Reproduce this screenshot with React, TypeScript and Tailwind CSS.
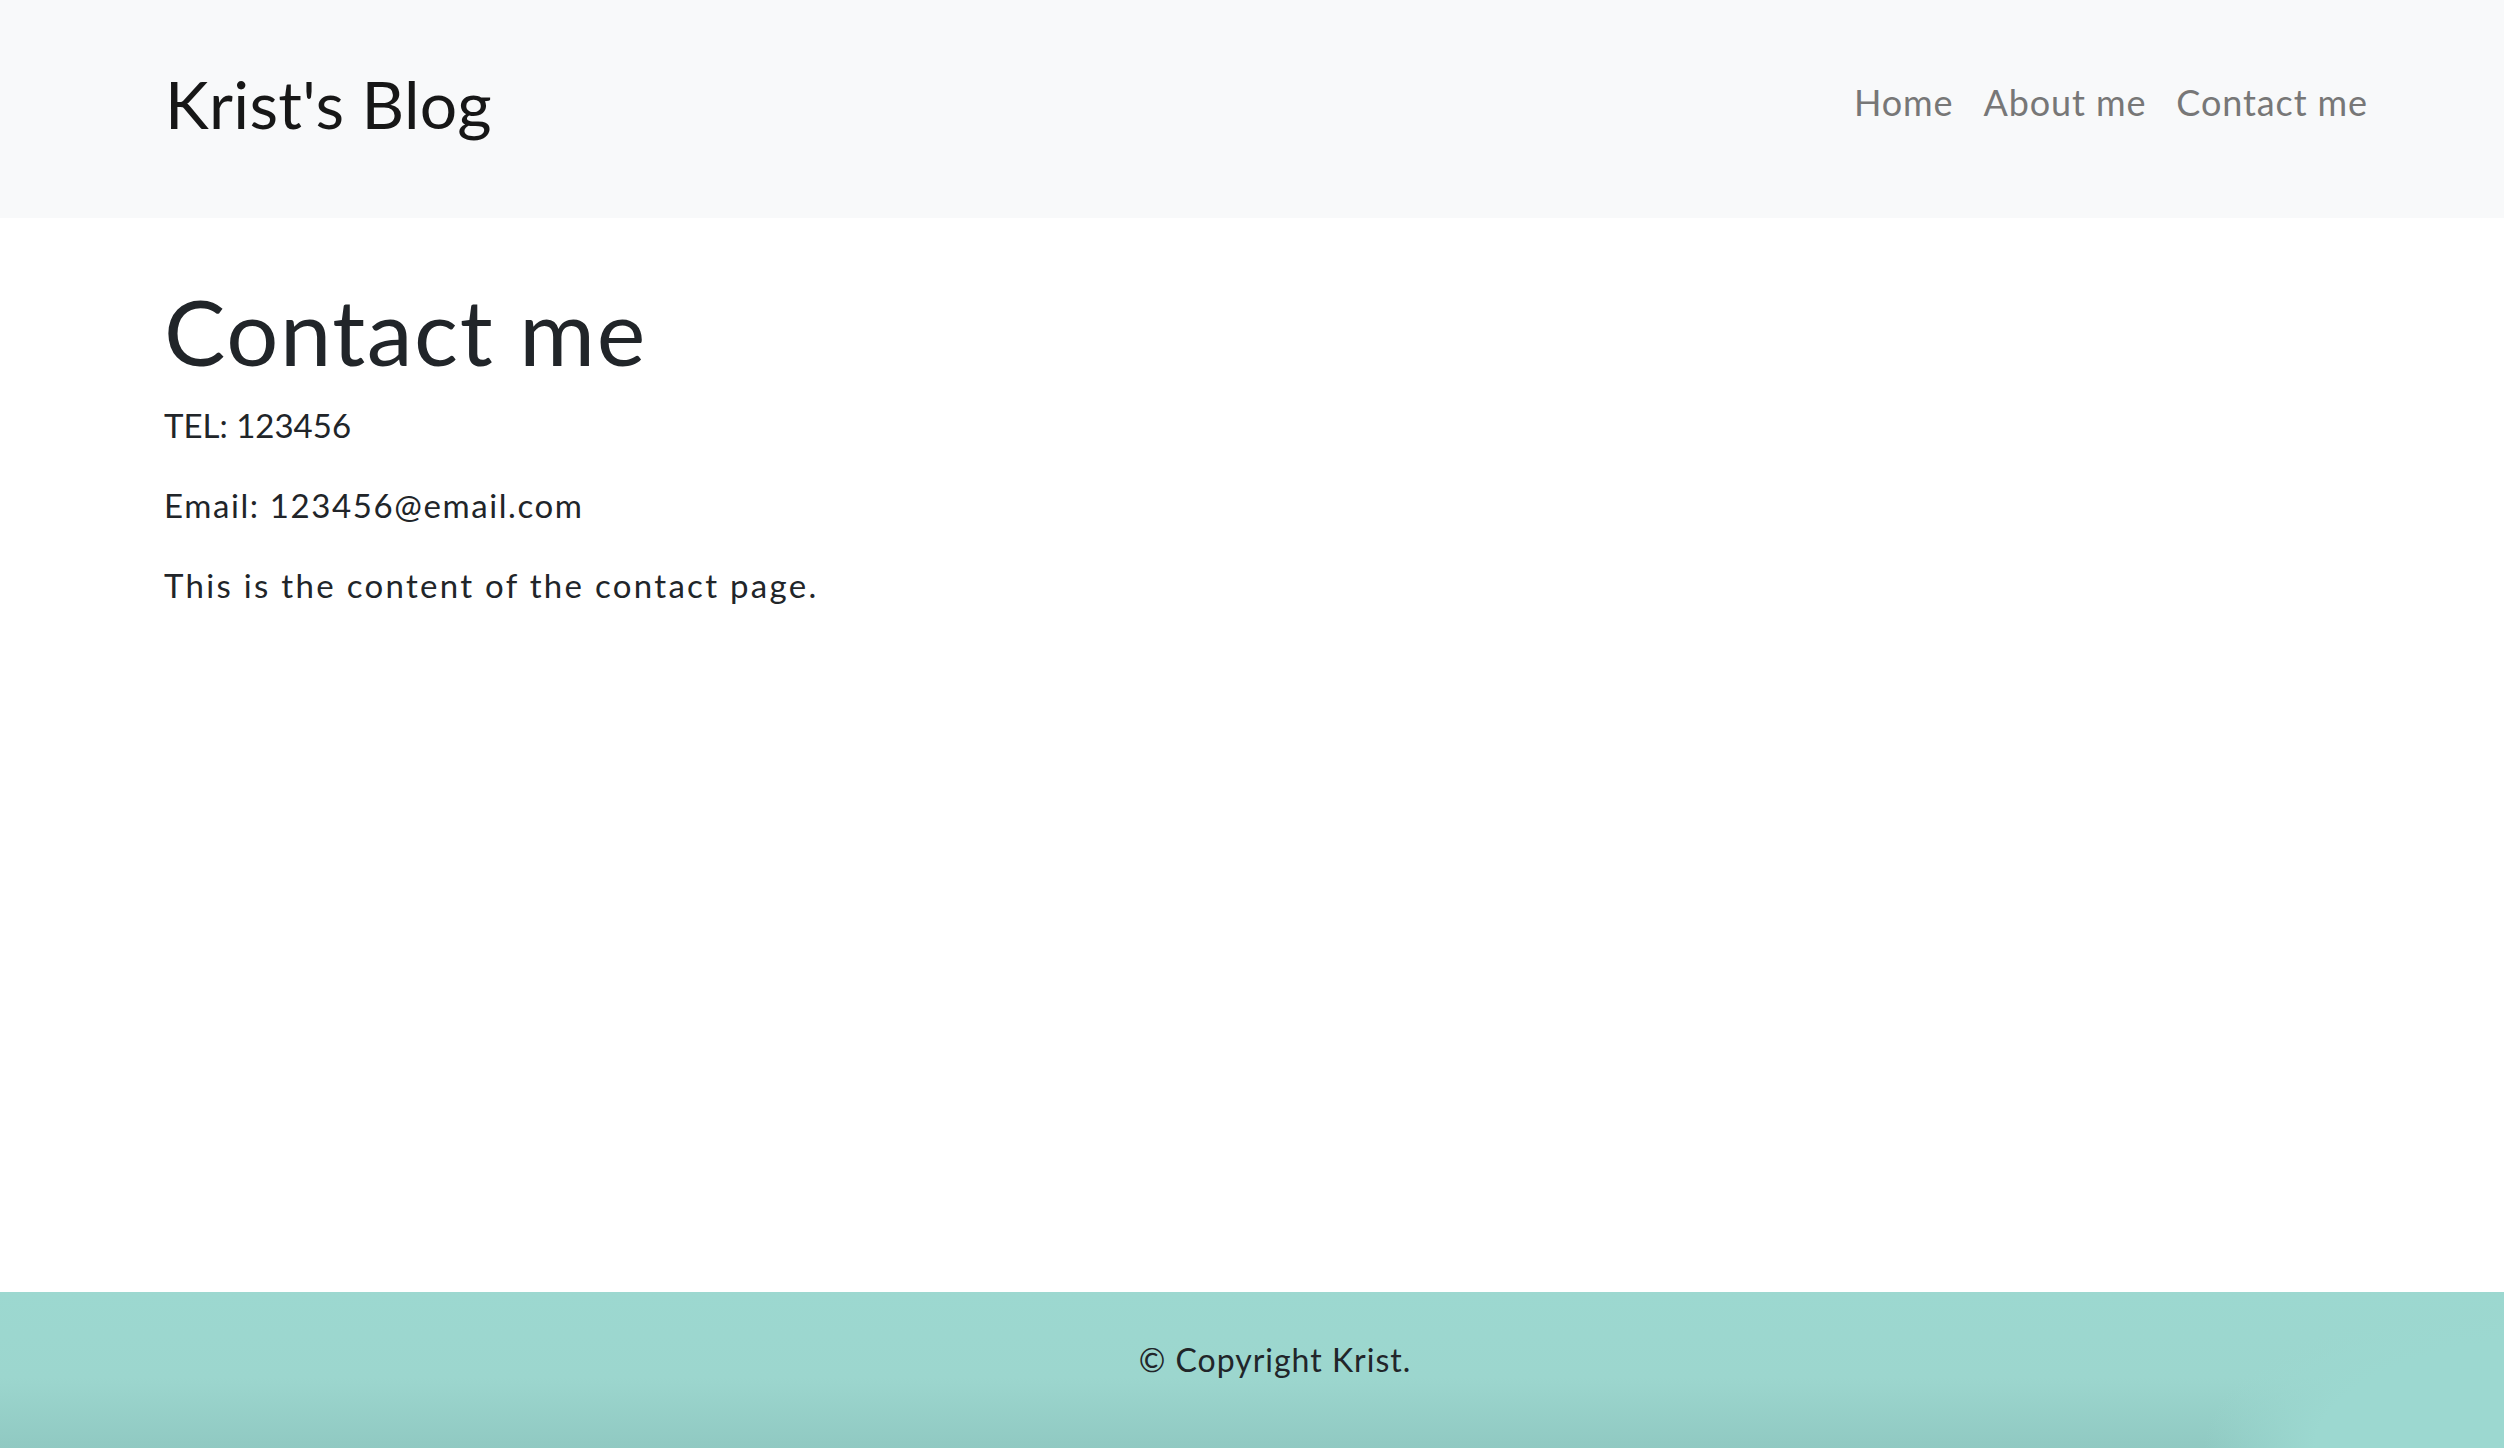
const links = ["Home", "About me", "Contact me"];

function Header() {
  return (
    <header className="flex h-[218px] shrink-0 items-start justify-between bg-[#f8f9fa] pl-[165px] pr-[136px]">
      <a href="#" className="mt-[64px] text-[66px] leading-[80px] tracking-[0.3px] text-[#171717] no-underline">
        Krist's Blog
      </a>
      <nav className="mt-[77px] flex gap-[30px]">
        {links.map((l) => (
          <a key={l} href="#" className="text-[36px] leading-[50px] tracking-[0.9px] text-[#777777] no-underline">
            {l}
          </a>
        ))}
      </nav>
    </header>
  );
}

function Footer() {
  return (
    <footer className="relative h-[156px] shrink-0 overflow-hidden bg-[linear-gradient(to_bottom,#9cd8d0_0%,#9cd6ce_55%,#90c9c2_100%)]">
      {/* lighter patch in the lower right corner */}
      <div className="absolute bottom-[-160px] right-[-440px] h-[320px] w-[740px] rounded-full bg-[radial-gradient(closest-side,#9cd8d0_70%,rgba(156,216,208,0)_100%)]" />
      <p className="relative pl-[46px] pt-[44px] text-center text-[32px] leading-[48px] tracking-[1px] text-[#212529]">
        © Copyright Krist.
      </p>
    </footer>
  );
}

export default function App() {
  return (
    <div className="flex min-h-screen flex-col bg-white font-['Lato','Noto_Sans',sans-serif] text-[#212529]">
      <Header />
      <main className="flex-1 px-[164px] pt-[58px]">
        <h1 className="text-[92px] font-normal leading-[110px] tracking-[1.6px]">Contact me</h1>
        <div className="mt-[14px] text-[33px] leading-[50px]">
          <p className="mb-[30px]">TEL: 123456</p>
          <p className="mb-[30px] tracking-[1.6px]">Email: 123456@email.com</p>
          <p className="mb-[30px] tracking-[2.3px]">This is the content of the contact page.</p>
        </div>
      </main>
      <Footer />
    </div>
  );
}
